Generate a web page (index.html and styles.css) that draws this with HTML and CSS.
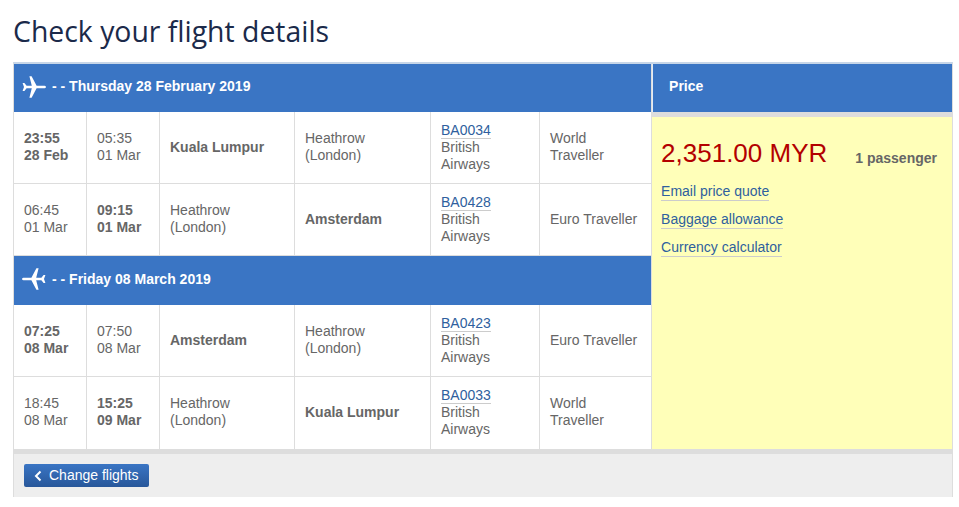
FILE: index.html

```html
<!DOCTYPE html>
<html lang="en">
<head>
  <meta charset="UTF-8" />
  <title>Check your flight details</title>
  <link rel="stylesheet" href="styles.css">
</head>
<body>

  <h1>Check your flight details</h1>

  <div class="panel">
    <div class="summary">
      <table class="flights">
        <colgroup>
          <col class="c-time"><col class="c-time"><col class="c-from"><col class="c-to"><col class="c-flight"><col class="c-cabin">
        </colgroup>
        <tr class="band band-first">
          <th colspan="6">
            <span class="band-title">
              <svg class="plane" viewBox="0 0 24 24"><path d="M24 12c0-.8-1-1.3-2.4-1.3h-7L9.6 1.2H7.4l2.4 9.5H4.6L2.4 7.9H.6L2 12 .6 16.1h1.8l2.2-2.8h5.2L7.4 22.8h2.2l5-9.5h7c1.4 0 2.4-.5 2.4-1.3z"/></svg>
              - - Thursday 28 February 2019
            </span>
          </th>
        </tr>
        <tr>
          <td><b>23:55<br>28 Feb</b></td>
          <td>05:35<br>01 Mar</td>
          <td><b>Kuala Lumpur</b></td>
          <td>Heathrow<br>(London)</td>
          <td><a href="#">BA0034</a><br>British<br>Airways</td>
          <td>World<br>Traveller</td>
        </tr>
        <tr>
          <td>06:45<br>01 Mar</td>
          <td><b>09:15<br>01 Mar</b></td>
          <td>Heathrow<br>(London)</td>
          <td><b>Amsterdam</b></td>
          <td><a href="#">BA0428</a><br>British<br>Airways</td>
          <td>Euro Traveller</td>
        </tr>
        <tr class="band">
          <th colspan="6">
            <span class="band-title">
              <svg class="plane flip" viewBox="0 0 24 24"><path d="M24 12c0-.8-1-1.3-2.4-1.3h-7L9.6 1.2H7.4l2.4 9.5H4.6L2.4 7.9H.6L2 12 .6 16.1h1.8l2.2-2.8h5.2L7.4 22.8h2.2l5-9.5h7c1.4 0 2.4-.5 2.4-1.3z"/></svg>
              - - Friday 08 March 2019
            </span>
          </th>
        </tr>
        <tr>
          <td><b>07:25<br>08 Mar</b></td>
          <td>07:50<br>08 Mar</td>
          <td><b>Amsterdam</b></td>
          <td>Heathrow<br>(London)</td>
          <td><a href="#">BA0423</a><br>British<br>Airways</td>
          <td>Euro Traveller</td>
        </tr>
        <tr>
          <td>18:45<br>08 Mar</td>
          <td><b>15:25<br>09 Mar</b></td>
          <td>Heathrow<br>(London)</td>
          <td><b>Kuala Lumpur</b></td>
          <td><a href="#">BA0033</a><br>British<br>Airways</td>
          <td>World<br>Traveller</td>
        </tr>
      </table>

      <div class="price">
        <div class="price-head">Price</div>
        <div class="price-body">
          <div class="price-line">
            <span class="amount">2,351.00 MYR</span>
            <b class="pax">1 passenger</b>
          </div>
          <a href="#">Email price quote</a>
          <a href="#">Baggage allowance</a>
          <a href="#">Currency calculator</a>
        </div>
      </div>
    </div>

    <div class="actions">
      <a class="back" href="#">
        <svg class="chev" viewBox="0 0 8 12"><path d="M6.5 1.5 2 6l4.5 4.5"/></svg>
        Change flights
      </a>
    </div>
  </div>

</body>
</html>
```

FILE: styles.css

```css
* {
  box-sizing: border-box;
}

body {
  margin: 0;
  background: #fff;
  font-family: "Liberation Sans", Arial, sans-serif;
  font-size: 14px;
  line-height: 17px;
  color: #666;
}

h1 {
  margin: 0;
  padding: 12px 0 0 13px;
  height: 62px;
  font-family: "Open Sans", sans-serif;
  font-size: 28.4px;
  line-height: 38px;
  font-weight: 400;
  color: #1b2a4a;
}

a {
  color: #2f5f9e;
  text-decoration: none;
}

.panel {
  width: 940px;
  margin-left: 13px;
  background: #eee;
  border-top: 2px solid #c7d6e8;
  border-left: 1px solid #ddd;
  border-right: 1px solid #ddd;
}

.summary {
  display: flex;
  background: #fff;
  border-bottom: 5px solid #ddd;
}

.flights {
  width: 637px;
  flex: none;
  table-layout: fixed;
  border-collapse: separate;
  border-spacing: 0;
}

.c-time { width: 73px; }
.c-from { width: 135px; }
.c-to { width: 136px; }
.c-flight { width: 109px; }
.c-cabin { width: 111px; }

.flights td {
  height: 72px;
  padding: 0 8px 1px 10px;
  border-right: 1px solid #ddd;
  border-bottom: 1px solid #ddd;
  vertical-align: middle;
}

.flights td:last-child {
  border-right: none;
}

.flights tr:last-child td {
  padding-bottom: 2px;
  border-bottom: none;
}

.flights td a {
  border-bottom: 1px solid #ccc;
}

.band th {
  height: 49px;
  padding: 0 0 3px 8px;
  background: #3a75c4;
  color: #fff;
  font-weight: 700;
  text-align: left;
}

.band-first th {
  height: 48px;
}

.band-title {
  display: flex;
  align-items: center;
  gap: 6px;
}

.plane {
  width: 24px;
  height: 24px;
  fill: #fff;
}

.flip {
  transform: scaleX(-1);
}

.price {
  flex: 1;
  display: flex;
  flex-direction: column;
  border-left: 1px solid #ddd;
}

.price-head {
  height: 48px;
  padding: 14px 0 0 16px;
  background: #3a75c4;
  color: #fff;
  font-weight: 700;
  border-left: 1px solid #e3ebf5;
}

.price-body {
  flex: 1;
  display: flex;
  flex-direction: column;
  align-items: flex-start;
  gap: 10px;
  padding: 20px 15px 0 9px;
  background: #ffffb9;
  border-top: 5px solid #ddd;
}

.price-body a {
  border-bottom: 1px solid #ccc;
}

.price-line {
  display: flex;
  align-self: stretch;
  justify-content: space-between;
  align-items: center;
  height: 32px;
  margin-bottom: 4px;
}

.amount {
  font-size: 26px;
  line-height: 30px;
  color: #b30000;
}

.pax {
  padding-top: 11px;
}

.actions {
  height: 43px;
  padding: 10px;
}

.back {
  display: inline-flex;
  align-items: center;
  gap: 7px;
  height: 23px;
  padding: 0 10px;
  border-radius: 2px;
  background: linear-gradient(#3a75c4, #28579a);
  color: #fff;
}

.chev {
  width: 8px;
  height: 12px;
  fill: none;
  stroke: #fff;
  stroke-width: 2;
}
```
